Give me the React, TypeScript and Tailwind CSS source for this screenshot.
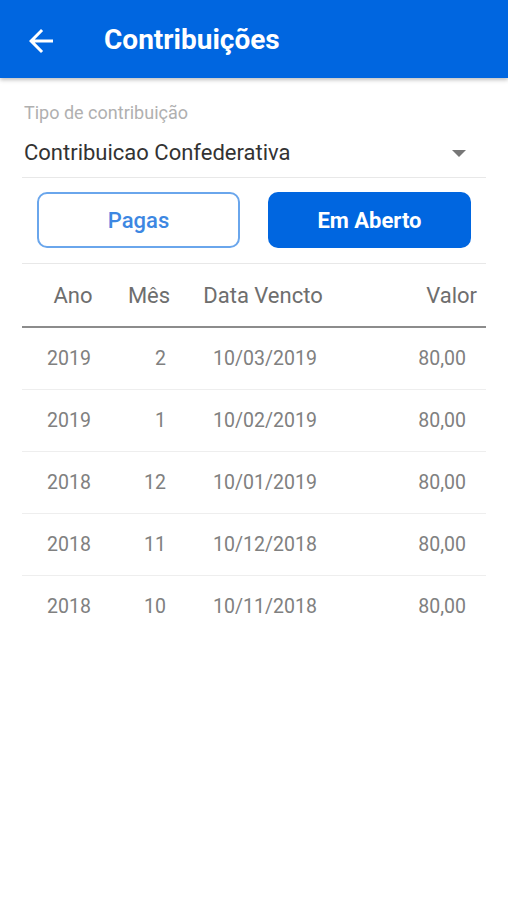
import React from "react";

const rows = [
  { ano: "2019", mes: "2", data: "10/03/2019", valor: "80,00" },
  { ano: "2019", mes: "1", data: "10/02/2019", valor: "80,00" },
  { ano: "2018", mes: "12", data: "10/01/2019", valor: "80,00" },
  { ano: "2018", mes: "11", data: "10/12/2018", valor: "80,00" },
  { ano: "2018", mes: "10", data: "10/11/2018", valor: "80,00" },
];

export default function App() {
  return (
    <div className="min-h-[900px] bg-white font-['Roboto',sans-serif]">
      {/* toolbar */}
      <header className="relative z-10 flex h-[78px] items-center bg-[#0066e0] shadow-[0_2px_4px_rgba(0,0,0,0.25)]">
        <svg viewBox="0 0 24 24" className="ml-[23px] mt-[4px] h-[36px] w-[36px] fill-white">
          <path d="M20 11H7.83l5.59-5.59L12 4l-8 8 8 8 1.41-1.41L7.83 13H20v-2z" />
        </svg>
        <h1 className="ml-[45px] mt-[2px] text-[28px] font-bold text-white">Contribuições</h1>
      </header>

      <main className="px-[22px]">
        {/* tipo */}
        <p className="mt-[24px] pl-[2px] text-[18px] leading-[22px] text-[#b0b0b0]">Tipo de contribuição</p>
        <div className="mt-[16px] flex items-center justify-between border-b border-[#e8e8e8] pb-[11px] pl-[2px] pr-[20px]">
          <span className="text-[22px] leading-[26px] text-[#333333]">Contribuicao Confederativa</span>
          <span className="h-0 w-0 border-x-[7px] border-t-[7px] border-x-transparent border-t-[#777777]" />
        </div>

        {/* abas */}
        <div className="mt-[14px] grid grid-cols-2 gap-[28px] border-b border-[#e8e8e8] px-[15px] pb-[15px]">
          <button className="h-[56px] rounded-[10px] border-2 border-[#6aa6ec] bg-white text-[22px] font-medium text-[#3d87e2]">
            Pagas
          </button>
          <button className="h-[56px] rounded-[10px] bg-[#0066e0] text-[22px] font-bold text-white">
            Em Aberto
          </button>
        </div>

        {/* tabela */}
        <div className="grid h-[62px] grid-cols-[100px_50px_160px_1fr] items-center text-[22px] text-[#6e6e6e]">
          <span className="pl-[2px] text-center">Ano</span>
          <span className="pl-[4px] text-center">Mês</span>
          <span className="whitespace-nowrap pl-[22px] text-center">Data Vencto</span>
          <span className="pr-[9px] text-right">Valor</span>
        </div>
        <div className="h-[2px] bg-[#8c8c8c]" />

        {rows.map((r, i) => (
          <div
            key={i}
            className={`grid h-[62px] grid-cols-[100px_50px_160px_1fr] items-center text-[19.5px] text-[#808080] ${
              i < rows.length - 1 ? "border-b border-[#eeeeee]" : ""
            }`}
          >
            <span className="pr-[6px] text-center">{r.ano}</span>
            <span className="pr-[6px] text-right">{r.mes}</span>
            <span className="pl-[26px] text-center">{r.data}</span>
            <span className="pr-[20px] text-right">{r.valor}</span>
          </div>
        ))}
      </main>
    </div>
  );
}
